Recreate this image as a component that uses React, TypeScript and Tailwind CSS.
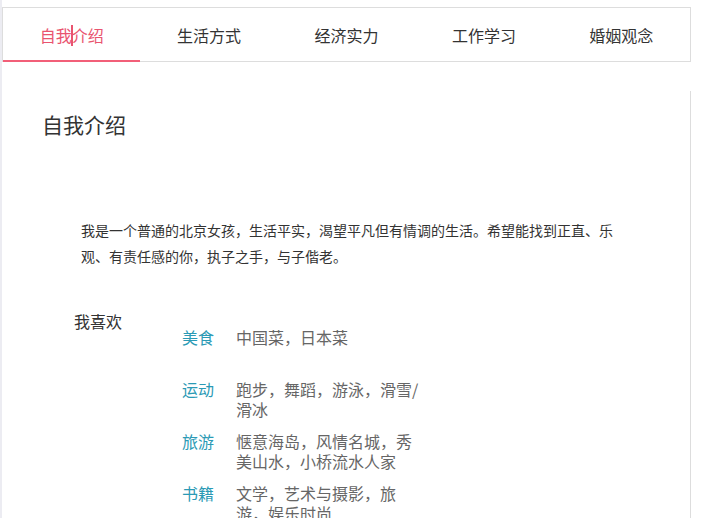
const TABS = ['自我介绍', '生活方式', '经济实力', '工作学习', '婚姻观念'];

const LIKES: { label: string; value: string }[] = [
  { label: '美食', value: '中国菜，日本菜' },
  { label: '运动', value: '跑步，舞蹈，游泳，滑雪/滑冰' },
  { label: '旅游', value: '惬意海岛，风情名城，秀美山水，小桥流水人家' },
  { label: '书籍', value: '文学，艺术与摄影，旅游，娱乐时尚' },
];

const font = { fontFamily: '"Noto Sans CJK SC", "Noto Sans", sans-serif' };

export default function App() {
  return (
    <div className="min-h-[518px] bg-white flex" style={font}>
      {/* left edge strip */}
      <div className="w-[2px] shrink-0 bg-[#ececf2]" />

      <div className="w-[689px] pt-[7px]">
        {/* Tabs */}
        <div className="flex h-[55px] border border-[#dddddd]">
          {TABS.map((tab, i) => (
            <div
              key={tab}
              className={`relative flex-1 flex items-center justify-center text-[16px] ${
                i === 0 ? 'text-[#e9546f]' : 'text-[#333333]'
              }`}
            >
              {i === 0 ? (
                <span className="relative">
                  自我
                  <span className="absolute left-[31px] top-[2px] h-[21px] w-[2px] bg-[#e9546f]" />
                  介绍
                </span>
              ) : (
                tab
              )}
              {i === 0 && (
                <span className="absolute left-0 right-0 bottom-[-1px] h-[2px] bg-[#f25f78]" />
              )}
            </div>
          ))}
        </div>

        {/* Content panel */}
        <div className="mt-[29px] border-r border-[#dddddd] min-h-[427px] pb-4">
          <h2 className="pt-[17px] pl-[40px] text-[21px] leading-[32px] text-[#333333] font-normal">
            自我介绍
          </h2>

          <p className="mt-[77px] ml-[79px] w-[540px] text-[14px] leading-[26px] text-[#333333]">
            我是一个普通的北京女孩，生活平实，渴望平凡但有情调的生活。希望能找到正直、乐观、有责任感的你，执子之手，与子偕老。
          </p>

          <div className="mt-[40px] ml-[72px] flex">
            <div className="w-[108px] shrink-0 text-[16px] leading-[24px] text-[#333333]">我喜欢</div>
            <div className="pt-[18px]">
              {LIKES.map((item) => (
                <div key={item.label} className="flex h-[52px] text-[16px] leading-[20px]">
                  <span className="w-[54px] shrink-0 text-[#2b9ab5]">{item.label}</span>
                  <span className="w-[184px] text-[#666666] break-all">{item.value}</span>
                </div>
              ))}
            </div>
          </div>
        </div>
      </div>
    </div>
  );
}
